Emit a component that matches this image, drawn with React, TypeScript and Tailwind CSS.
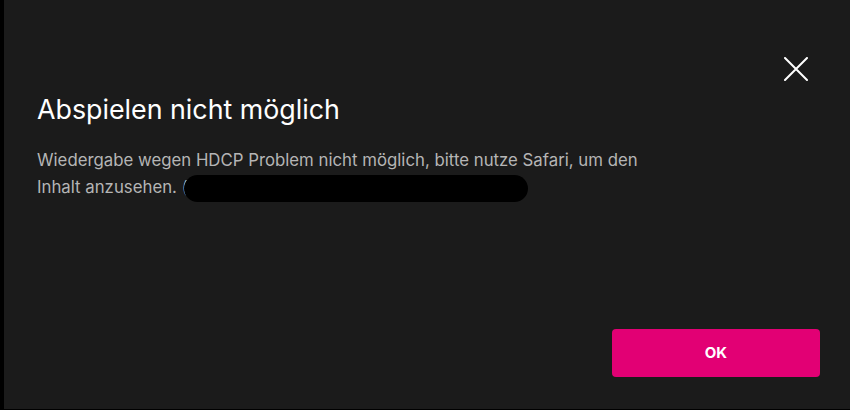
import React from 'react';

export default function App() {
  return (
    <div className="flex h-[410px] w-[850px] bg-black pb-px pl-1" style={{ fontFamily: 'Inter, "Noto Sans", sans-serif' }}>
      <div className="flex flex-1 flex-col bg-[#1b1b1b]">
        <div className="flex justify-end pt-[57px] pr-[42px]">
          <button className="text-white" aria-label="Schließen">
            <svg width="24" height="24" viewBox="0 0 24 24" fill="none" stroke="currentColor" strokeWidth="2" strokeLinecap="round">
              <path d="M1 1L23 23M23 1L1 23" />
            </svg>
          </button>
        </div>
        <div className="pl-[33px] pt-[11px]">
          <h1 className="text-[26.8px] leading-[34px] font-normal text-white">Abspielen nicht möglich</h1>
          <p className="mt-[21px] w-[640px] text-[16.8px] leading-[27px] text-[#b5b5b5]">
            Wiedergabe wegen HDCP Problem nicht möglich, bitte nutze Safari, um den Inhalt anzusehen. (
            <span className="relative -ml-[4px] inline-block h-[27px] w-[344px] rounded-full bg-black align-middle" />
          </p>
        </div>
        <div className="mt-auto flex justify-end pb-[32px] pr-[30px]">
          <button className="flex h-[48px] w-[208px] items-center justify-center rounded bg-[#e20074] text-[15px] font-bold text-white">
            OK
          </button>
        </div>
      </div>
    </div>
  );
}
